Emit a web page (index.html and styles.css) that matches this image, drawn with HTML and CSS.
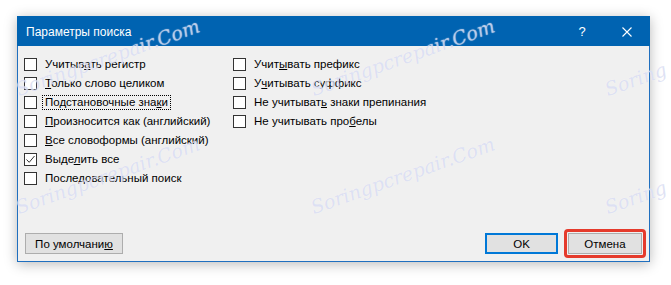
FILE: index.html
```html
<!DOCTYPE html>
<html lang="ru">
<head>
<meta charset="utf-8">
<title>Параметры поиска</title>
<link rel="stylesheet" href="styles.css">
</head>
<body>
<div class="page">
  <div class="dialog">
    <div class="titlebar">
      <span class="title">Параметры поиска</span>
      <div class="tb-buttons">
        <span class="tb-help">?</span>
        <span class="tb-close">
          <svg width="10" height="10" viewBox="0 0 10 10"><path d="M0.5 0.5 L9.5 9.5 M9.5 0.5 L0.5 9.5" stroke="#fff" stroke-width="1.1" fill="none"/></svg>
        </span>
      </div>
    </div>
    <div class="body">
      <div class="options">
        <div class="col col-left">
          <label class="opt"><span class="box"></span><span class="lbl">Учитыв<u>а</u>ть регистр</span></label>
          <label class="opt"><span class="box"></span><span class="lbl"><u>Т</u>олько слово целиком</span></label>
          <label class="opt"><span class="box"></span><span class="lbl focus">Подстановочные зна<u>к</u>и</span></label>
          <label class="opt"><span class="box"></span><span class="lbl"><u>П</u>роизносится как (английский)</span></label>
          <label class="opt"><span class="box"></span><span class="lbl"><u>В</u>се словоформы (английский)</span></label>
          <label class="opt"><span class="box"><svg width="11" height="11" viewBox="0 0 11 11"><path d="M1.5 5.5 L4.2 8.3 L9.5 2" stroke="#333" stroke-width="1" fill="none"/></svg></span><span class="lbl">Выде<u>л</u>ить все</span></label>
          <label class="opt"><span class="box"></span><span class="lbl">После<u>д</u>овательный поиск</span></label>
        </div>
        <div class="col col-right">
          <label class="opt"><span class="box"></span><span class="lbl">Учит<u>ы</u>вать префикс</span></label>
          <label class="opt"><span class="box"></span><span class="lbl">У<u>ч</u>итывать суффикс</span></label>
          <label class="opt"><span class="box"></span><span class="lbl">Не учитыват<u>ь</u> знаки препинания</span></label>
          <label class="opt"><span class="box"></span><span class="lbl">Не учитывать про<u>б</u>елы</span></label>
        </div>
      </div>
      <div class="buttons">
        <button class="btn btn-reset">По умолчани<u>ю</u></button>
        <div class="btn-group">
          <button class="btn btn-default">OK</button>
          <button class="btn btn-cancel">Отмена</button>
        </div>
      </div>
    </div>
  </div>
  <div class="watermarks">
    <span class="wm wm1">Soringpcrepair.Com</span>
    <span class="wm wm2">Soringpcrepair.Com</span>
    <span class="wm wm3">Soring</span>
    <span class="wm wm4">Soringpcrepair.Com</span>
    <span class="wm wm5">Soringpcrepair.Com</span>
    <span class="wm wm6">Soring</span>
  </div>
</div>
</body>
</html>
```
FILE: styles.css
```css
* { box-sizing: border-box; }
html, body { margin: 0; padding: 0; background: #fff; }
.page {
  position: relative;
  width: 671px;
  height: 285px;
  overflow: hidden;
  padding: 16px 0 0 17px;
  font-family: "Liberation Sans", Arial, sans-serif;
  font-size: 11.5px;
  color: #000;
}
.dialog {
  width: 633px;
  height: 246px;
  background: #f0f0f0;
  border: 1px solid #1f6fbf;
  border-top: 0;
  box-shadow: 0 2px 12px rgba(0,0,0,0.28);
  display: flex;
  flex-direction: column;
}
.titlebar {
  height: 30px;
  background: #0063b1;
  display: flex;
  align-items: center;
  margin: 0 -1px;
  padding-left: 9px;
  color: #fff;
}
.title { font-size: 12px; flex: 1; padding-top: 1px; }
.tb-buttons { display: flex; height: 100%; }
.tb-help, .tb-close {
  display: flex;
  align-items: center;
  justify-content: center;
  height: 100%;
}
.tb-help { width: 44px; font-size: 13px; padding-top: 1px; }
.tb-close { width: 46px; padding-top: 1px; }
.tb-close svg { display: block; }
.body {
  flex: 1;
  display: flex;
  flex-direction: column;
  justify-content: space-between;
  padding: 9px 7px 7px 6px;
}
.options { display: flex; }
.col { display: flex; flex-direction: column; }
.col-left { width: 209px; }
.opt {
  display: flex;
  align-items: center;
  height: 19px;
  white-space: nowrap;
}
.box {
  width: 13px;
  height: 13px;
  border: 1px solid #333;
  background: #fff;
  flex: none;
  display: flex;
  align-items: center;
  justify-content: center;
  margin-right: 5px;
}
.box svg { display: block; }
.lbl { padding: 0 2px; border: 1px solid transparent; line-height: 13px; }
.lbl.focus { border: 1px dotted #000; }
u { text-decoration-thickness: 1px; text-underline-offset: 1px; }
.buttons {
  display: flex;
  justify-content: space-between;
  align-items: flex-end;
  padding-left: 1px;
}
.btn-group { display: flex; gap: 10px; }
.btn {
  font-family: inherit;
  font-size: 11.5px;
  color: #000;
  height: 21px;
  background: #e1e1e1;
  border: 1px solid #adadad;
  padding: 0;
  margin: 0;
  display: flex;
  align-items: center;
  justify-content: center;
}
.btn-reset { width: 98px; }
.btn-default { width: 73px; border: 2px solid #0078d7; }
.btn-cancel { width: 74px; position: relative; }
.btn-cancel::after {
  content: "";
  position: absolute;
  left: -5px;
  top: -5px;
  right: -5px;
  bottom: -5px;
  border: 3px solid #e53b2c;
  border-radius: 4px;
}
.watermarks { position: absolute; inset: 0; pointer-events: none; }
.wm {
  position: absolute;
  font-family: "DejaVu Serif", serif;
  font-style: italic;
  font-size: 19px;
  line-height: 22px;
  color: rgba(196, 202, 236, 0.55);
  text-shadow: 0 0 1px rgba(255,255,255,0.8);
  transform: rotate(-19.5deg);
  transform-origin: 0 100%;
  white-space: nowrap;
}
.wm1 { left: 20px; top: 78px; }
.wm2 { left: 315px; top: 78px; }
.wm3 { left: 609px; top: 78px; }
.wm4 { left: 20px; top: 196px; }
.wm5 { left: 315px; top: 196px; }
.wm6 { left: 609px; top: 196px; }
```
